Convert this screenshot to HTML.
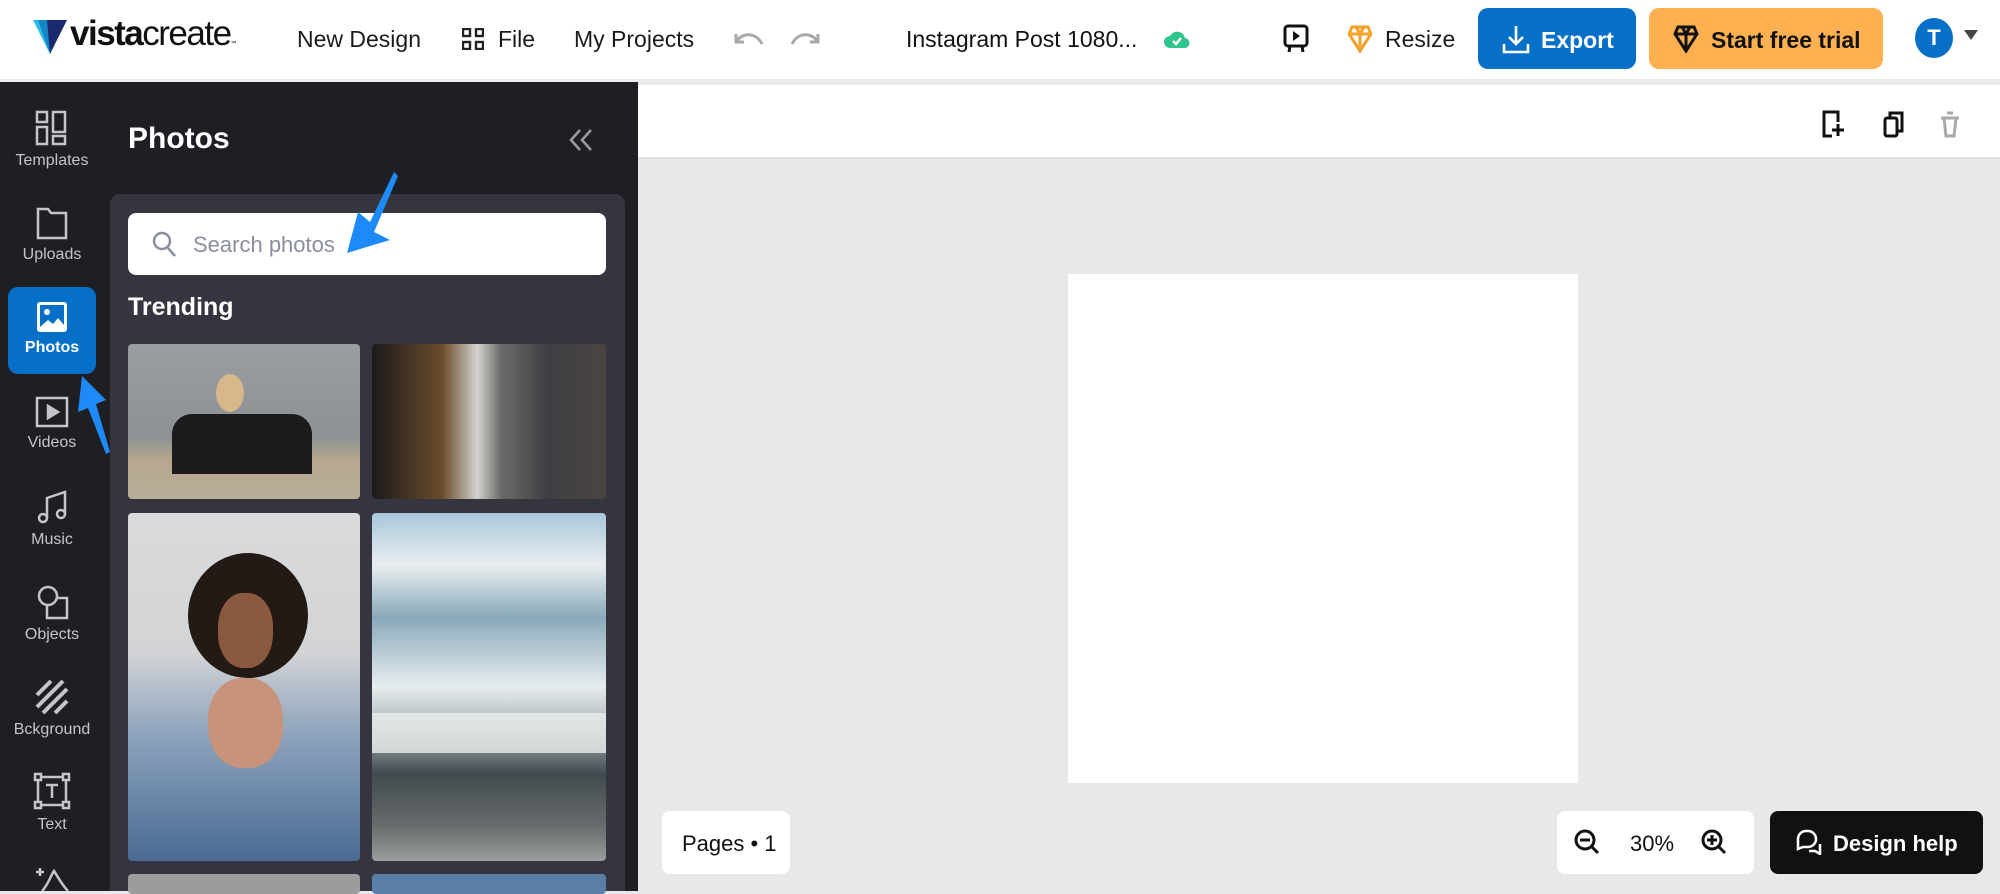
<!DOCTYPE html>
<html><head><meta charset="utf-8"><style>
*{box-sizing:border-box;margin:0;padding:0}
body{width:2000px;height:891px;overflow:hidden;font-family:"Liberation Sans",sans-serif;background:#e8e8ea;position:relative}
.abs{position:absolute}
.hdr{left:0;top:0;width:2000px;height:82px;background:#fff;border-bottom:3px solid #ececee}
.ht{font-size:23px;color:#1b1b1f;top:26px;font-weight:500}
.rail{left:0;top:82px;width:108px;height:809px;background:#1e1f24}
.panel{left:108px;top:82px;width:530px;height:809px;background:#1e1f24}
.ri{position:absolute;left:8px;width:88px;text-align:center;color:#c4c5cc;font-size:16px}
.ri svg{display:block;margin:0 auto 6px}
.ph{position:absolute;border-radius:4px;overflow:hidden}
</style></head><body>
<div class="abs hdr"></div>
<!-- logo -->
<svg class="abs" style="left:33px;top:20px" width="34" height="36" viewBox="0 0 34 36"><polygon points="0,0 12,0 17,34" fill="#2bbde8"/><polygon points="12,0 34,0 17,34" fill="#1a2a6c"/><polygon points="5,0 14,0 17,34" fill="#1585c8"/></svg>
<div class="abs" style="left:70px;top:14px;font-size:35px;color:#111;letter-spacing:-1.5px"><b>vista</b>create<span style="font-size:6px">™</span></div>
<div class="abs ht" style="left:297px">New Design</div>
<svg class="abs" style="left:462px;top:28px" width="22" height="22" viewBox="0 0 22 22" fill="none" stroke="#222" stroke-width="2.4"><rect x="1" y="1" width="7" height="7"/><rect x="14" y="1" width="7" height="7"/><rect x="1" y="14" width="7" height="7"/><rect x="14" y="14" width="7" height="7"/></svg>
<div class="abs ht" style="left:498px">File</div>
<div class="abs ht" style="left:574px">My Projects</div>
<svg class="abs" style="left:732px;top:30px" width="90" height="20" viewBox="0 0 90 20" fill="none" stroke="#a8a9ad" stroke-width="3"><path d="M4 4v8h8M4 12C10 2 24 2 30 14"/><path d="M86 4v8h-8M86 12C80 2 66 2 60 14"/></svg>
<div class="abs ht" style="left:906px;color:#111">Instagram Post 1080...</div>
<svg class="abs" style="left:1164px;top:28px" width="26" height="22" viewBox="0 0 26 22"><path d="M6 20a6 6 0 0 1 0-12a8 8 0 0 1 15 2a5 5 0 0 1-1 10z" fill="#2fc58f"/><path d="M9 13l3 3 5-6" stroke="#fff" stroke-width="2.5" fill="none"/></svg>
<svg class="abs" style="left:1283px;top:24px" width="26" height="30" viewBox="0 0 26 30" fill="none" stroke="#111" stroke-width="3"><rect x="2" y="2" width="22" height="20" rx="3"/><path d="M7 22l-1 6M19 22l1 6"/><path d="M10 7v10l7-5z" fill="#111" stroke="none"/></svg>
<svg class="abs" style="left:1348px;top:24px" width="24" height="30" viewBox="0 0 24 30" fill="none" stroke="#f5a22c" stroke-width="3"><path d="M4 3h16l3 7-11 17L1 10z M1 10h22 M8 3l4 7 4-7 M12 10v17"/></svg>
<div class="abs ht" style="left:1385px">Resize</div>
<div class="abs" style="left:1478px;top:8px;width:158px;height:61px;background:#0670c8;border-radius:10px;color:#fff;font-size:23px;font-weight:600;padding:19px 0 0 63px">Export</div>
<svg class="abs" style="left:1502px;top:24px" width="28" height="30" viewBox="0 0 28 30" fill="none" stroke="#fff" stroke-width="2.6"><path d="M14 2v18M7 13l7 7 7-7M2 20v8h24v-8"/></svg>
<div class="abs" style="left:1649px;top:8px;width:234px;height:61px;background:#ffb051;border-radius:10px;color:#111;font-size:23px;font-weight:600;padding:19px 0 0 62px">Start free trial</div>
<svg class="abs" style="left:1673px;top:24px" width="26" height="30" viewBox="0 0 24 30" fill="none" stroke="#111" stroke-width="3"><path d="M4 3h16l3 7-11 17L1 10z M1 10h22 M8 3l4 7 4-7 M12 10v17"/></svg>
<div class="abs" style="left:1915px;top:18px;width:38px;height:40px;border-radius:50%;background:#0670c8;color:#fff;font-size:22px;text-align:center;line-height:40px;font-weight:600">T</div>
<div class="abs" style="left:1964px;top:30px;width:0;height:0;border-left:7px solid transparent;border-right:7px solid transparent;border-top:10px solid #444"></div>

<!-- toolbar -->
<div class="abs" style="left:638px;top:85px;width:1362px;height:74px;background:#fff;border-bottom:2px solid #e0e0e2"></div>
<svg class="abs" style="left:1820px;top:110px" width="140" height="28" viewBox="0 0 140 28" fill="none" stroke-width="3"><path d="M14 2H4v24h8M4 2h14v10M18 14v12M12 20h12" stroke="#111"/><rect x="65" y="8" width="12" height="18" rx="2" stroke="#111"/><path d="M70 8V3h12v18h-5" stroke="#111"/><path d="M128 8h18M131 8l2 18h8l2-18M134 3h6" stroke="#a8a9ad" transform="translate(-7,0)"/></svg>
<!-- page -->
<div class="abs" style="left:1068px;top:274px;width:510px;height:509px;background:#fff"></div>
<div class="abs" style="left:662px;top:811px;width:128px;height:63px;background:#fff;border-radius:8px;font-size:22px;color:#111;padding:20px 0 0 20px;font-weight:500">Pages • 1</div>
<div class="abs" style="left:1557px;top:811px;width:197px;height:63px;background:#fff;border-radius:8px;font-size:22px;color:#111;padding:20px 0 0 73px;font-weight:500">30%</div>
<svg class="abs" style="left:1574px;top:829px" width="160" height="28" viewBox="0 0 160 28" fill="none" stroke="#111" stroke-width="3"><circle cx="11" cy="11" r="9"/><path d="M17 17l7 7M6 11h10"/><circle cx="146" cy="11" r="9" transform="translate(-8,0)"/><path d="M144 17l7 7M133 11h10M138 6v10"/></svg>
<div class="abs" style="left:1770px;top:811px;width:213px;height:63px;background:#111;border-radius:8px;font-size:22px;color:#fff;padding:20px 0 0 63px;font-weight:600">Design help</div>
<svg class="abs" style="left:1795px;top:829px" width="28" height="26" viewBox="0 0 28 26" fill="none" stroke="#fff" stroke-width="2.5"><path d="M3 20V10a8 8 0 0 1 8-8h2a8 8 0 0 1 0 16H8z"/><path d="M14 22h6l5 3V15"/></svg>

<!-- rail -->
<div class="abs rail"></div>
<div class="abs panel"></div>
<div class="ri" style="top:110px"><svg width="34" height="36" viewBox="0 0 34 36" fill="none" stroke="#c4c5cc" stroke-width="2.5"><rect x="2" y="2" width="10" height="10"/><rect x="18" y="2" width="12" height="20"/><rect x="2" y="17" width="10" height="17"/><rect x="18" y="26" width="12" height="8"/></svg>Templates</div>
<div class="ri" style="top:206px"><svg width="34" height="34" viewBox="0 0 34 34" fill="none" stroke="#c4c5cc" stroke-width="2.5"><path d="M3 3h10l3 4h15v25H3z"/></svg>Uploads</div>
<div class="ri" style="top:287px;height:87px;background:#0670c8;border-radius:10px;color:#fff;font-weight:600;padding-top:14px"><svg width="32" height="32" viewBox="0 0 32 32"><rect x="1" y="1" width="30" height="30" rx="3" fill="#fff"/><rect x="4" y="4" width="24" height="24" fill="#0670c8"/><circle cx="11" cy="11" r="3" fill="#fff"/><path d="M4 26l8-7 5 4 5-6 6 7v4H4z" fill="#fff"/></svg>Photos</div>
<div class="ri" style="top:396px"><svg width="34" height="32" viewBox="0 0 34 32" fill="none" stroke="#c4c5cc" stroke-width="2.5"><rect x="2" y="2" width="30" height="28"/><path d="M13 10v12l10-6z" fill="#c4c5cc"/></svg>Videos</div>
<div class="ri" style="top:489px"><svg width="34" height="36" viewBox="0 0 34 36" fill="none" stroke="#c4c5cc" stroke-width="2.5"><circle cx="8" cy="29" r="4"/><circle cx="26" cy="25" r="4"/><path d="M12 29V9l18-6v22"/></svg>Music</div>
<div class="ri" style="top:584px"><svg width="34" height="36" viewBox="0 0 34 36" fill="none" stroke="#c4c5cc" stroke-width="2.5"><circle cx="13" cy="12" r="9"/><path d="M22 14h10v20H12V22"/></svg>Objects</div>
<div class="ri" style="top:679px"><svg width="34" height="36" viewBox="0 0 34 36" fill="none" stroke="#c4c5cc" stroke-width="4"><path d="M2 16L16 2M2 28L28 2M8 34L32 10M20 34L32 22"/></svg>Bckground</div>
<div class="ri" style="top:772px"><svg width="38" height="38" viewBox="0 0 38 38" fill="none" stroke="#c4c5cc" stroke-width="2.5"><rect x="5" y="5" width="28" height="28"/><rect x="2" y="2" width="6" height="6" fill="#1e1f24"/><rect x="30" y="2" width="6" height="6" fill="#1e1f24"/><rect x="2" y="30" width="6" height="6" fill="#1e1f24"/><rect x="30" y="30" width="6" height="6" fill="#1e1f24"/><path d="M13 13h12M19 13v13"/></svg>Text</div>
<svg class="abs" style="left:32px;top:864px" width="40" height="27" viewBox="0 0 40 27" fill="none" stroke="#c4c5cc" stroke-width="2.5"><path d="M4 8h8M8 4v8M10 27c6-6 8-14 12-20 4 6 8 14 14 20"/></svg>

<!-- panel -->
<div class="abs" style="left:128px;top:122px;font-size:30px;color:#fff;font-weight:700">Photos</div>
<svg class="abs" style="left:568px;top:128px" width="26" height="24" viewBox="0 0 26 24" fill="none" stroke="#9a9ba3" stroke-width="2.5"><path d="M12 2L3 12l9 10M23 2l-9 10 9 10"/></svg>
<div class="abs" style="left:110px;top:194px;width:515px;height:697px;background:#34353f;border-radius:10px 10px 0 0"></div>
<div class="abs" style="left:128px;top:213px;width:478px;height:62px;background:#fff;border-radius:8px;font-size:22px;color:#8a8e9e;padding:19px 0 0 65px">Search photos</div>
<svg class="abs" style="left:151px;top:230px" width="28" height="30" viewBox="0 0 28 30" fill="none" stroke="#8a8e9e" stroke-width="2.5"><circle cx="11" cy="11" r="8"/><path d="M17 18l7 8"/></svg>
<div class="abs" style="left:128px;top:293px;font-size:25px;color:#fff;font-weight:700">Trending</div>

<div class="ph" style="left:128px;top:344px;width:232px;height:155px;background:linear-gradient(180deg,#9a9ea0 0%,#8d9193 60%,#b5a88e 75%,#b7ad98 100%)">
<div class="abs" style="left:44px;top:70px;width:140px;height:60px;background:#1b1b1d;border-radius:20px 20px 0 0"></div><div class="abs" style="left:88px;top:30px;width:28px;height:38px;background:#d8b88a;border-radius:50%"></div></div>
<div class="ph" style="left:372px;top:344px;width:234px;height:155px;background:linear-gradient(90deg,#1b1a1a 0%,#6b4c2b 30%,#d3d2cf 45%,#6e6c6a 55%,#3e3f43 75%,#4b4441 100%)"></div>
<div class="ph" style="left:128px;top:513px;width:232px;height:348px;background:linear-gradient(180deg,#d9dadc 0%,#d3d4d6 40%,#8aa1bb 65%,#4a6b93 100%)">
<div class="abs" style="left:60px;top:40px;width:120px;height:125px;background:#231a16;border-radius:50%"></div><div class="abs" style="left:90px;top:80px;width:55px;height:75px;background:#8b5a3e;border-radius:45%"></div><div class="abs" style="left:80px;top:165px;width:75px;height:90px;background:#c7937a;border-radius:45%"></div></div>
<div class="ph" style="left:372px;top:513px;width:234px;height:348px;background:linear-gradient(180deg,#a8c6da 0%,#e9eef0 15%,#8aa9ba 30%,#e7edef 50%,#a9b2b5 62%,#414a4e 75%,#686c6d 90%,#9b9d9e 100%)"><div class="abs" style="left:0;top:200px;width:234px;height:40px;background:#eaeceb;opacity:.8"></div></div>
<div class="ph" style="left:128px;top:874px;width:232px;height:20px;background:#9c9c9c"></div>
<div class="ph" style="left:372px;top:874px;width:234px;height:20px;background:#5b80a8"></div>

<!-- annotation arrows -->
<svg class="abs" style="left:0;top:0" width="640" height="891"><path d="M398 176 L374 232 L390 240 L347 253 L358 212 L370 222 L394 172Z" fill="#1e8af7"/><path d="M110 452 L96 404 L106 400 L82 376 L78 412 L88 408 L106 454Z" fill="#1e8af7"/></svg>
</body></html>
